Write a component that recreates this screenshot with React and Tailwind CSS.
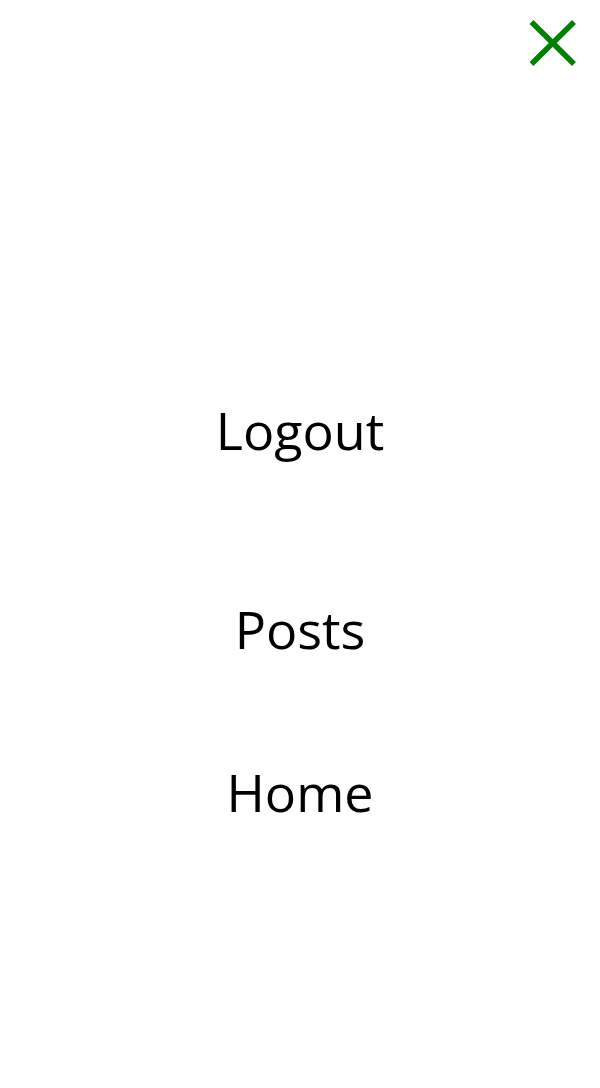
import React from 'react';

const links = ['Logout', 'Posts', 'Home'];

const App = () => {
    return (
        <div className="relative min-h-[1088px] w-full bg-white text-black" style={{ fontFamily: '"Open Sans", sans-serif' }}>
            {/* Close button */}
            <button className="absolute right-[24px] top-[19px] w-[48px] h-[48px]">
                <svg width="48" height="48" viewBox="0 0 48 48">
                    <line x1="3.5" y1="3" x2="46" y2="45" stroke="#008000" strokeWidth="5.5" />
                    <line x1="46" y1="3" x2="3.5" y2="45" stroke="#008000" strokeWidth="5.5" />
                </svg>
            </button>

            {/* Menu */}
            <nav className="flex flex-col items-center pt-[404px]">
                <a className="text-[52px] leading-none">{links[0]}</a>
                <a className="text-[52px] leading-none mt-[147px]">{links[1]}</a>
                <a className="text-[52px] leading-none mt-[111px]">{links[2]}</a>
            </nav>
        </div>
    );
};

export default App;
